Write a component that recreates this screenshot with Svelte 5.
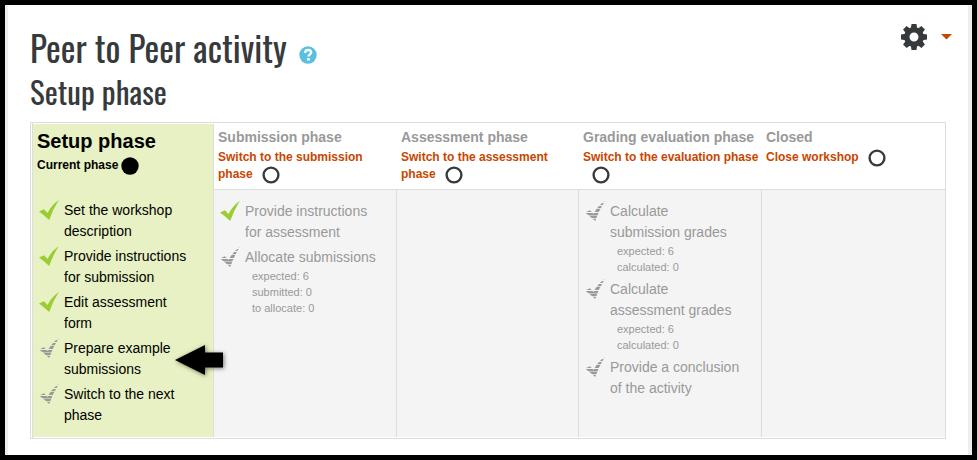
<script>
  let phases = [
    {
      title: "Setup phase",
      current: true,
      tasks: [
        { text: "Set the workshop description", done: true },
        { text: "Provide instructions for submission", done: true },
        { text: "Edit assessment form", done: true },
        { text: "Prepare example submissions", pointer: true },
        { text: "Switch to the next phase" },
      ],
    },
    {
      title: "Submission phase",
      action: "Switch to the submission phase",
      tasks: [
        { text: "Provide instructions for assessment", done: true },
        {
          text: "Allocate submissions",
          details: ["expected: 6", "submitted: 0", "to allocate: 0"],
        },
      ],
    },
    {
      title: "Assessment phase",
      action: "Switch to the assessment phase",
      tasks: [],
    },
    {
      title: "Grading evaluation phase",
      action: "Switch to the evaluation phase",
      tasks: [
        {
          text: "Calculate submission grades",
          details: ["expected: 6", "calculated: 0"],
        },
        {
          text: "Calculate assessment grades",
          details: ["expected: 6", "calculated: 0"],
        },
        { text: "Provide a conclusion of the activity" },
      ],
    },
    { title: "Closed", action: "Close workshop", tasks: [] },
  ];

  const teeth = [0, 45, 90, 135, 180, 225, 270, 315];
  const tick = "M0 11.5L5 9.3 8.5 13Q12.5 5 19.8 0 14 9 10.2 20 5 15 0 11.5z";
</script>

<main>
  <header class="top">
    <div class="title">
      <h1>Peer to Peer activity</h1>
      <button class="help" aria-label="Help with Peer to Peer activity">
        <svg width="18" height="18" viewBox="0 0 18 18">
          <circle cx="9" cy="9" r="8.7" fill="#5bc0de" />
          <path
            d="M6 6.8C6.2 4.9 7.4 4 9.1 4c1.8 0 3 1 3 2.5 0 2.1-2.6 2.1-2.6 4"
            fill="none"
            stroke="#fff"
            stroke-width="2.4"
          />
          <rect x="8.1" y="12" width="2.7" height="2.6" fill="#fff" />
        </svg>
      </button>
    </div>
    <button class="menu" aria-label="Actions menu">
      <svg width="26" height="26" viewBox="-13 -13 26 26" fill="#373a3c">
        {#each teeth as angle}
          <path d="M-3.2-8L-2.5-13H2.5L3.2-8z" transform="rotate({angle})" />
        {/each}
        <circle r="7.2" fill="none" stroke="#373a3c" stroke-width="5.4" />
      </svg>
      <svg width="11" height="6" viewBox="0 0 11 6">
        <path d="M0 0h11L5.5 5.5z" fill="#c84600" />
      </svg>
    </button>
  </header>

  <h2>Setup phase</h2>

  <div class="plan">
    {#each phases as phase}
      <section class:current={phase.current}>
        <div class="head">
          <h3>{phase.title}</h3>
          <div class="switch">
            {#if phase.current}
              <span>Current phase</span><svg class="dot" width="18" height="18" viewBox="0 0 18 18">
                <circle cx="9" cy="9" r="8.7" />
              </svg>
            {:else}
              <a href="#switch">{phase.action}</a><svg class="ring" width="18" height="18" viewBox="0 0 18 18">
                <circle cx="9" cy="9" r="7.4" fill="none" stroke="#373a3c" stroke-width="2.4" />
              </svg>
            {/if}
          </div>
        </div>
        <ul class="tasks">
          {#each phase.tasks as task}
            <li>
              <svg class="tick" width="20" height="20" viewBox="0 0 20 20">
                {#if task.done}
                  <path d={tick} fill="#9acd32" />
                {:else}
                  <clipPath id="stripes">
                    <path d="M0 0h20v1H0zM0 2h20v2H0zM0 5h20v2.2H0zM0 8h20v3H0zM0 12h20v2.4H0zM0 15h20v2.2H0zM0 18h20v2H0z" />
                  </clipPath>
                  <path d={tick} fill="#999" clip-path="url(#stripes)" />
                {/if}
              </svg>
              <div>
                {task.text}
                {#each task.details ?? [] as detail}
                  <div class="detail">{detail}</div>
                {/each}
              </div>
              {#if task.pointer}
                <svg class="pointer" width="48" height="30" viewBox="0 0 48 30">
                  <path d="M0 15L30 0v7.5h18v15H30V30z" />
                </svg>
              {/if}
            </li>
          {/each}
        </ul>
      </section>
    {/each}
  </div>
</main>

<style>
  :global(body) {
    margin: 0;
    background: #000;
  }
  main {
    margin: 5px;
    padding: 0 22px 16px;
    border: solid #f0eeee;
    border-width: 0 4px 0 3px;
    background: #fff;
    color: #373a3c;
    font-family: "Liberation Sans", Arial, sans-serif;
    font-size: 14px;
    line-height: 21px;
  }
  h1,
  h2,
  h3,
  ul {
    margin: 0;
    padding: 0;
  }
  h1,
  h2 {
    font-family: Oswald, "Liberation Sans Narrow", "Arial Narrow", sans-serif;
    font-weight: 400;
  }
  h1 {
    font-size: 35px;
    line-height: 46px;
  }
  h2 {
    font-size: 31px;
    line-height: 34px;
    margin-bottom: 14px;
  }
  button {
    display: flex;
    align-items: center;
    padding: 0;
    border: 0;
    background: none;
    cursor: pointer;
  }
  .top {
    display: flex;
    justify-content: space-between;
    align-items: flex-start;
    margin-right: -6px;
    padding-top: 19px;
    padding-bottom: 4px;
  }
  .title {
    display: flex;
    align-items: center;
    gap: 12px;
  }
  .help {
    padding-top: 16px;
  }
  .menu {
    gap: 14px;
  }
  .plan {
    display: grid;
    grid-template-columns: 180fr 183fr 182fr 183fr 184fr;
    grid-template-rows: auto 1fr;
    padding: 1px 0;
    border: 1px solid #ddd;
    border-left: 3px double #ddd;
  }
  section {
    display: grid;
    grid-row: span 2;
    grid-template-rows: subgrid;
    border-left: 1px solid #ddd;
    color: #999;
  }
  .current {
    border-left: 0;
    background: #e7f1c3;
    color: #000;
  }
  section + section:not(:nth-child(2)) {
    border-left-color: transparent;
    border-image: linear-gradient(#fff 66px, #ddd 66px) 1;
  }
  .head {
    padding: 3px 0 6px 4px;
    border-bottom: 1px solid #ddd;
  }
  .current .head {
    border-color: transparent;
  }
  h3 {
    margin-bottom: 2px;
    font-size: 14px;
    line-height: 20px;
  }
  .current h3 {
    font-size: 20px;
    line-height: 28px;
  }
  .switch {
    font-size: 12px;
    line-height: 17px;
    font-weight: 700;
  }
  .switch svg {
    margin: -1px 0;
    vertical-align: middle;
  }
  .switch .dot {
    margin-left: 3px;
  }
  .switch .ring {
    margin-left: 9px;
  }
  a {
    color: #c84600;
    text-decoration: none;
  }
  a:hover {
    text-decoration: underline;
  }
  .tasks {
    padding: 11px 20px 11px 6px;
    background: #f4f4f4;
    list-style: none;
  }
  .current .tasks {
    padding-top: 10px;
    background: none;
  }
  li {
    display: flex;
    gap: 5px;
    position: relative;
    margin-bottom: 4px;
  }
  li:last-child {
    margin-bottom: 0;
  }
  .tick {
    flex: none;
  }
  .detail {
    padding-left: 7px;
    font-size: 11px;
    line-height: 16px;
  }
  .pointer {
    position: absolute;
    top: 7px;
    right: -30px;
    overflow: visible;
    filter: drop-shadow(1px 1px 2px rgba(0, 0, 0, 0.5));
  }
</style>
